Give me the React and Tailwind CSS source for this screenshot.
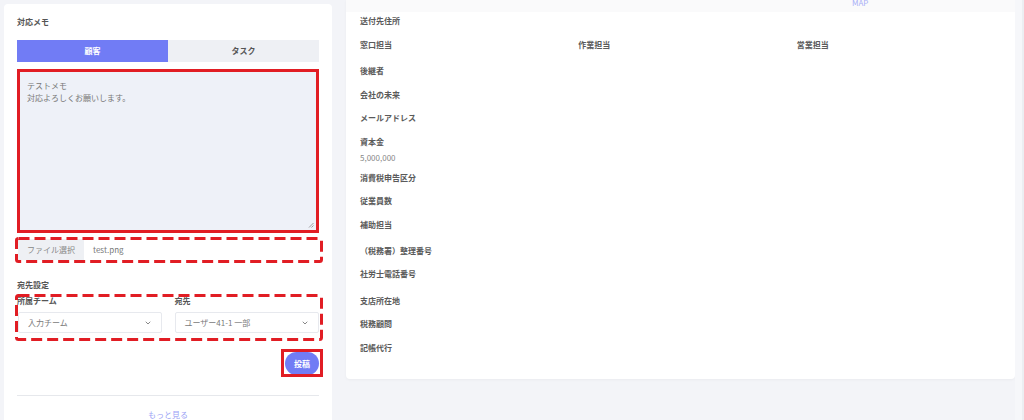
import React from 'react';

const font = { fontFamily: '"Noto Sans CJK JP", "Noto Sans", sans-serif' };

const rows = [
  { labels: ['送付先住所'], h: 'h-[24px]' },
  { labels: ['窓口担当', '作業担当', '営業担当'], h: 'h-[26px]' },
  { labels: ['後継者'], h: 'h-[24px]' },
  { labels: ['会社の未来'], h: 'h-[23px]' },
  { labels: ['メールアドレス'], h: 'h-[24px]' },
  { labels: ['資本金'], value: '5,000,000', h: 'h-[36px]' },
  { labels: ['消費税申告区分'], h: 'h-[23px]' },
  { labels: ['従業員数'], h: 'h-[24px]' },
  { labels: ['補助担当'], h: 'h-[26px]' },
  { labels: ['（税務署）整理番号'], h: 'h-[23px]' },
  { labels: ['社労士電話番号'], h: 'h-[27px]' },
  { labels: ['支店所在地'], h: 'h-[23px]' },
  { labels: ['税務顧問'], h: 'h-[24px]' },
  { labels: ['記帳代行'], h: 'h-[37px]' },
];

const Chevron = () => (
  <svg width="6" height="4" viewBox="0 0 6 4" fill="none">
    <path d="M1 1l2 2 2-2" stroke="#888" strokeWidth="1" strokeLinecap="round" strokeLinejoin="round" />
  </svg>
);

// red dashed annotation frame drawn over the content
const DashedFrame = ({ w, h, className }) => (
  <svg className={`absolute pointer-events-none ${className}`} width={w} height={h}>
    <rect x="1.5" y="1.5" width={w - 3} height={h - 3} rx="2" fill="none" stroke="#e11d24" strokeWidth="3" strokeDasharray="11 5" />
  </svg>
);

const Select = ({ value }) => (
  <div className="h-[21px] flex items-center justify-between pl-[9px] pr-[10px] bg-white border border-[#e7e9ee] rounded-[2px] text-[8px] text-[#7a7a7a]">
    <span>{value}</span>
    <Chevron />
  </div>
);

const MemoPanel = () => (
  <div className="w-[328px] mt-[4px] bg-white rounded-t-[4px] pt-[12px] px-[13px] pb-[20px] shrink-0">
    <h3 className="text-[8px] leading-[12px] font-bold text-[#555]">対応メモ</h3>

    <div className="mt-[12px] grid grid-cols-2 h-[22px] text-[8px] font-bold">
      <div className="bg-[#717cf5] text-white flex items-center justify-center">顧客</div>
      <div className="bg-[#eef0f4] text-[#555] flex items-center justify-center">タスク</div>
    </div>

    <div className="relative mt-[7px] h-[164px] bg-[#eef1f8] pt-[11px] px-[10px] text-[8px] leading-[12px] text-[#777]">
      <p>テストメモ</p>
      <p>対応よろしくお願いします。</p>
      <svg className="absolute right-[5px] bottom-[5px]" width="6" height="6" viewBox="0 0 6 6">
        <path d="M1 5.5L5.5 1M3.5 5.5L5.5 3.5" stroke="#888" strokeWidth="0.8" />
      </svg>
      <div className="absolute inset-0 border-[3px] border-[#e11d24]" />
    </div>

    <div className="relative mt-[6px] h-[21px] flex items-center bg-white text-[8px] text-[#777]">
      <div className="h-full w-[66px] ml-[1px] bg-[#eef0f4] flex items-center justify-center text-[#888]">ファイル選択</div>
      <span className="ml-[9px]">test.png</span>
      <DashedFrame w={308} h={26} className="-top-[2px] -left-[2px]" />
    </div>

    <p className="mt-[19px] text-[8px] leading-[12px] font-bold text-[#555]">宛先設定</p>

    <div className="relative mt-[4px] grid grid-cols-2 gap-x-[13px]">
      <div>
        <p className="text-[8px] leading-[12px] font-bold text-[#555]">所属チーム</p>
        <div className="mt-[5px] ml-[1px]">
          <Select value="入力チーム" />
        </div>
      </div>
      <div>
        <p className="text-[8px] leading-[12px] font-bold text-[#555]">宛先</p>
        <div className="mt-[5px]">
          <Select value="ユーザー41-1 一部" />
        </div>
      </div>
      <DashedFrame w={308} h={47} className="-top-[1px] -left-[2px]" />
    </div>

    <div className="mt-[19px] flex justify-end">
      <div className="relative flex">
        <button className="w-[34px] h-[23px] rounded-full bg-[#717cf5] text-white text-[8px] font-bold">投稿</button>
        <div className="absolute -top-[3px] -bottom-[2px] -left-[4px] -right-[4px] border-[3px] border-[#e11d24]" />
      </div>
    </div>

    <div className="mt-[20px] border-t border-[#e6e8ec]" />
    <p className="mt-[13px] text-center text-[8px] leading-[12px] text-[#9aa2f5]">もっと見る</p>
  </div>
);

const InfoPanel = () => (
  <div className="w-[669px] ml-[14px] bg-white rounded-b-[4px] shadow-[0_1px_3px_rgba(0,0,0,0.04)] shrink-0">
    <div className="h-[12px] bg-[#fafafb] overflow-hidden pl-[506px]">
      <p className="-mt-[3px] text-[8px] leading-[12px] text-[#a9aff7]">MAP</p>
    </div>
    <div className="pl-[14px] pt-[3px]">
      {rows.map((row) => (
        <div key={row.labels[0]} className={row.h}>
          {row.labels.length > 1 ? (
            <div className="grid grid-cols-3">
              {row.labels.map((l) => (
                <p key={l} className="text-[8px] leading-[12px] font-bold text-[#5a5a5a]">{l}</p>
              ))}
            </div>
          ) : (
            <p className="text-[8px] leading-[12px] font-bold text-[#5a5a5a]">{row.labels[0]}</p>
          )}
          {row.value && <p className="mt-[4px] text-[8px] leading-[12px] text-[#888]">{row.value}</p>}
        </div>
      ))}
    </div>
  </div>
);

export default function App() {
  return (
    <div className="w-[1024px] h-[420px] overflow-hidden bg-[#f3f4f8] flex items-start pl-[4px]" style={font}>
      <MemoPanel />
      <InfoPanel />
      <div className="ml-auto w-[9px] h-full bg-[#f6f7fa] border-r-2 border-[#eceef2]" />
    </div>
  );
}
